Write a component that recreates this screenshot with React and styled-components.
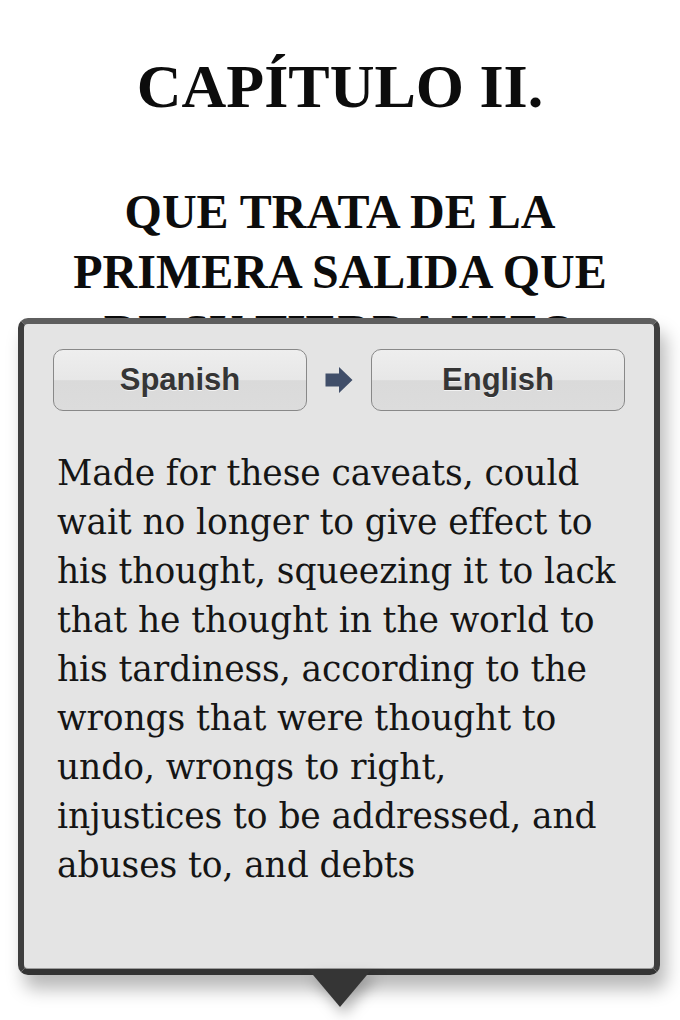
import React from 'react'
import styled, { createGlobalStyle } from 'styled-components';

const GlobalStyle = createGlobalStyle`
    html, body {
        margin: 0;
        padding: 0;
        background: #ffffff;
    }
    body {
        width: 680px;
        height: 1020px;
        overflow: hidden;
    }
`;

const headingLines = [
    "QUE TRATA DE LA",
    "PRIMERA SALIDA QUE",
    "DE SU TIERRA HIZO",
    "EL INGENIOSO DON",
    "QUIJOTE.",
];

const translationLines = [
    "Made for these caveats, could",
    "wait no longer to give effect to",
    "his thought, squeezing it to lack",
    "that he thought in the world to",
    "his tardiness, according to the",
    "wrongs that were thought to",
    "undo, wrongs to right,",
    "injustices to be addressed, and",
    "abuses to, and debts",
];

const ArrowIcon = () => (
    <svg width="28" height="28" viewBox="0 0 28 28">
        <path d="M0.5 7.5 H14 V1 L27.5 14 L14 27 V20.5 H0.5 Z" fill="#404e69" />
    </svg>
);

const App = () => {
    return (
        <Page>
            <GlobalStyle />
            <Chapter>CAPÍTULO II.</Chapter>
            <SubTitle>
                {headingLines.map((line) => (
                    <HeadingLine key={line}>{line}</HeadingLine>
                ))}
            </SubTitle>
            <Popover>
                <LanguageRow>
                    <LanguageButton>Spanish</LanguageButton>
                    <ArrowIcon />
                    <LanguageButton>English</LanguageButton>
                </LanguageRow>
                <Translation>
                    {translationLines.map((line) => (
                        <TextLine key={line}>{line}</TextLine>
                    ))}
                </Translation>
            </Popover>
        </Page>
    );
}

export default App

const Page = styled.div`
    position: relative;
    width: 680px;
    height: 1020px;
    overflow: hidden;
    padding-top: 50px;
    box-sizing: border-box;
    color: #0c0c0c;
    font-family: "Liberation Serif", "Times New Roman", serif;
`;
const Chapter = styled.h1`
    margin: 0;
    text-align: center;
    font-size: 62px;
    line-height: 72px;
    font-weight: 700;
`;
const SubTitle = styled.h2`
    margin: 60px 0 0;
    text-align: center;
    font-size: 48px;
    line-height: 60px;
    font-weight: 700;
`;
const HeadingLine = styled.span`
    display: block;
`;
const Popover = styled.div`
    position: absolute;
    left: 18px;
    top: 318px;
    width: 642px;
    height: 657px;
    box-sizing: border-box;
    padding: 25px 29px 0;
    background: #e4e4e4;
    border: 6px solid #3e3e3e;
    border-top-color: #5e5e5e;
    border-bottom-color: #333;
    border-radius: 10px;
    box-shadow: 6px 14px 18px rgba(0, 0, 0, 0.28), inset 0 -1px 0 #9c9c9c;
    &::after {
        content: "";
        position: absolute;
        left: 284px;
        top: 100%;
        border-left: 32px solid transparent;
        border-right: 32px solid transparent;
        border-top: 38px solid #353535;
        filter: drop-shadow(4px 8px 7px rgba(0, 0, 0, 0.28));
    }
`;
const LanguageRow = styled.div`
    display: grid;
    grid-template-columns: 1fr auto 1fr;
    align-items: center;
    column-gap: 18px;
`;
const LanguageButton = styled.div`
    height: 62px;
    box-sizing: border-box;
    display: flex;
    align-items: center;
    justify-content: center;
    border: 1.5px solid #888;
    border-radius: 10px;
    background: linear-gradient(#eeeeee 0%, #e7e7e7 50%, #dadada 51%, #dcdcdc 100%);
    font-family: "Liberation Sans", Arial, sans-serif;
    font-weight: 700;
    font-size: 31px;
    color: #353535;
    text-shadow: 0 1px 0 rgba(255, 255, 255, 0.7);
`;
const Translation = styled.div`
    margin-top: 38px;
    padding-left: 4px;
    font-family: "DejaVu Serif", Georgia, serif;
    font-size: 34.5px;
    letter-spacing: -0.1px;
    line-height: 49px;
    color: #151515;
`;
const TextLine = styled.div`
    white-space: nowrap;
`;
